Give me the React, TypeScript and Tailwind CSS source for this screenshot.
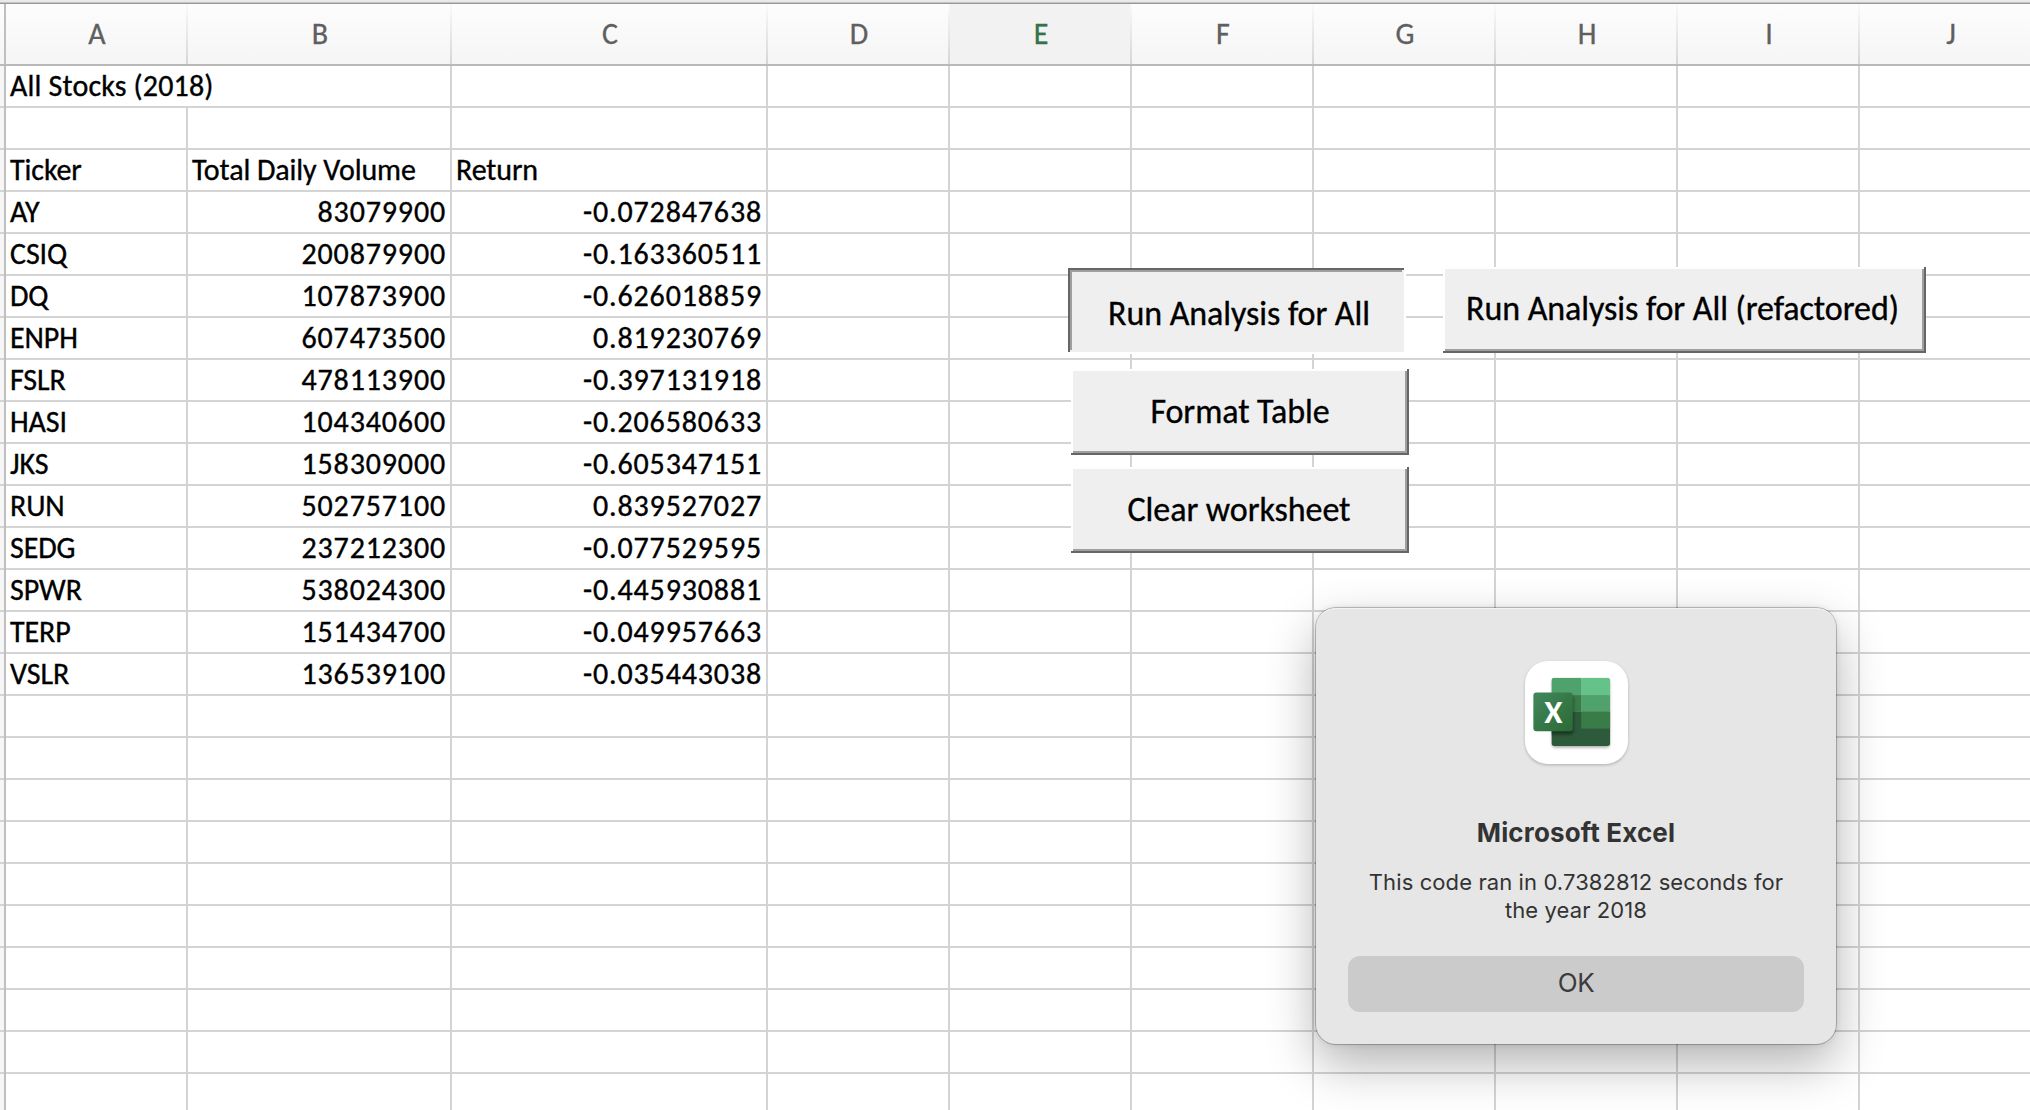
const COLUMNS = [
  { name: "A", width: "w-[182px]" },
  { name: "B", width: "w-[264px]" },
  { name: "C", width: "w-[316px]" },
  { name: "D", width: "w-[182px]" },
  { name: "E", width: "w-[182px]" },
  { name: "F", width: "w-[182px]" },
  { name: "G", width: "w-[182px]" },
  { name: "H", width: "w-[182px]" },
  { name: "I", width: "w-[182px]" },
  { name: "J", width: "w-[182px]" },
];

const ROWS: string[][] = [
  ["All Stocks (2018)"],
  [],
  ["Ticker", "Total Daily Volume", "Return"],
  ["AY", "83079900", "-0.072847638"],
  ["CSIQ", "200879900", "-0.163360511"],
  ["DQ", "107873900", "-0.626018859"],
  ["ENPH", "607473500", "0.819230769"],
  ["FSLR", "478113900", "-0.397131918"],
  ["HASI", "104340600", "-0.206580633"],
  ["JKS", "158309000", "-0.605347151"],
  ["RUN", "502757100", "0.839527027"],
  ["SEDG", "237212300", "-0.077529595"],
  ["SPWR", "538024300", "-0.445930881"],
  ["TERP", "151434700", "-0.049957663"],
  ["VSLR", "136539100", "-0.035443038"],
  ...Array.from({ length: 10 }, () => [] as string[]),
];

function ColumnHeaders() {
  return (
    <div className="flex h-[62px] shrink-0 border-b-2 border-[#b9b9b9] bg-linear-to-b from-[#fdfdfd] to-[#f5f5f5]">
      <div className="w-[6px] shrink-0 border-r-2 border-[#bfbfbf]" />
      {COLUMNS.map((c) => (
        <div key={c.name} className={`flex shrink-0 ${c.width}`}>
          <div
            className={`flex-1 pl-[2px] text-center text-[30px] leading-[60px] [-webkit-text-stroke:0.3px] ${
              c.name === "E" ? "bg-[#f2f2f2] text-[#337348]" : "text-[#5f5f5f]"
            }`}
          >
            {c.name}
          </div>
          <div className="w-[2px] bg-linear-to-b from-[#fafafa] to-[#d6d6d6]" />
        </div>
      ))}
    </div>
  );
}

function Row({ cells, spill }: { cells: string[]; spill: boolean }) {
  return (
    <div className="flex h-[42px] shrink-0">
      <div className="w-[6px] shrink-0 border-r-2 border-[#bfbfbf] bg-[#f6f6f6]">
        <div className="h-full border-b-2 border-[#d4d4d4]" />
      </div>
      {COLUMNS.map((c, i) => {
        const text = cells[i] ?? "";
        const numeric = /^-?\d/.test(text);
        return (
          <div
            key={c.name}
            className={`shrink-0 border-b-2 border-[#d4d4d4] pl-[4px] whitespace-nowrap text-[30px] leading-[40px] text-black [-webkit-text-stroke:0.35px] ${c.width} ${
              numeric ? "pr-[4px] text-right tracking-[0.85px]" : ""
            } ${spill && i === 0 ? "tracking-[0.16px]" : "border-r-2"} ${
              !numeric && !spill ? "tracking-[-0.1px]" : ""
            }`}
          >
            {text}
          </div>
        );
      })}
    </div>
  );
}

const RAISED =
  "shadow-[inset_-2px_-2px_0_#666,inset_2px_2px_0_#fff,inset_-4px_-4px_0_#9f9f9f]";
const PRESSED =
  "shadow-[inset_-2px_-2px_0_#fff,inset_2px_2px_0_#666,inset_-4px_-4px_0_#efefef,inset_4px_4px_0_#9f9f9f]";

function SheetButton({ label, place, pressed }: { label: string; place: string; pressed?: boolean }) {
  return (
    <button
      className={`absolute h-[86px] whitespace-nowrap bg-[#efefef] text-center text-[34px] tracking-[-0.06px] text-black [-webkit-text-stroke:0.35px] ${place} ${
        pressed ? PRESSED : RAISED
      }`}
    >
      {label}
    </button>
  );
}

function ExcelIcon() {
  return (
    <svg className="size-[103px] overflow-visible" viewBox="74 62 308 308">
      <defs>
        <linearGradient id="tile" x1="0" y1="0" x2="1" y2="1">
          <stop offset="0" stopColor="#41885a" />
          <stop offset="1" stopColor="#2b6a35" />
        </linearGradient>
        <clipPath id="book">
          <rect x="153" y="112" width="176" height="204" rx="9" />
        </clipPath>
        <filter id="soft" x="-30%" y="-30%" width="160%" height="160%">
          <feGaussianBlur stdDeviation="5" />
        </filter>
      </defs>
      <rect x="74" y="66" width="308" height="308" rx="68" fill="#000" opacity=".22" filter="url(#soft)" />
      <rect x="74" y="62" width="308" height="308" rx="68" fill="#fff" />
      <rect x="155" y="118" width="172" height="203" rx="9" fill="#000" opacity=".35" filter="url(#soft)" />
      <g clipPath="url(#book)">
        <rect x="153" y="112" width="89" height="52" fill="#4fa26b" />
        <rect x="242" y="112" width="87" height="52" fill="#65c389" />
        <rect x="153" y="164" width="89" height="50" fill="#3a7c48" />
        <rect x="242" y="164" width="87" height="50" fill="#4fa26b" />
        <rect x="153" y="214" width="176" height="103" fill="#2d5a3b" />
        <rect x="242" y="214" width="87" height="50" fill="#3a7c48" />
        <rect x="103" y="166" width="116" height="116" rx="9" fill="#000" opacity=".4" filter="url(#soft)" />
      </g>
      <rect x="99" y="156" width="118" height="116" rx="9" fill="url(#tile)" />
      <text
        x="159"
        y="246"
        textAnchor="middle"
        fill="#fff"
        fontSize="99"
        fontWeight="700"
        fontFamily="Carlito, Lato, sans-serif"
      >
        X
      </text>
    </svg>
  );
}

function Alert() {
  return (
    <div className="absolute left-[1316px] top-[608px] flex h-[436px] w-[520px] flex-col items-center rounded-[20px] bg-[#e6e6e6] px-8 pt-[53px] font-['Inter',sans-serif] text-[#333] shadow-[inset_0_1px_0_#f3f3f3,0_0_0_1px_rgba(0,0,0,0.22),0_0_6px_rgba(0,0,0,0.12),0_20px_50px_rgba(0,0,0,0.3)]">
      <ExcelIcon />
      <div className="mt-[53px] text-[26px] leading-[32px] font-bold tracking-[0.15px]">Microsoft Excel</div>
      <div className="mt-[19px] text-center text-[22px] leading-[28px] tracking-[0.1px]">
        This code ran in 0.7382812 seconds for
        <br />
        the year 2018
      </div>
      <button className="mt-[32px] h-[56px] w-full rounded-[12px] bg-[#cbcbcb] pb-[3px] text-[26px] tracking-[-0.3px] text-[#3c3c3c]">
        OK
      </button>
    </div>
  );
}

export default function App() {
  return (
    <div className="relative flex h-[1110px] w-[2030px] flex-col overflow-hidden bg-white font-[Carlito,Calibri,Lato,sans-serif]">
      <div className="h-[4px] shrink-0 border-b border-[#999] bg-[#e9e9e9]">
        <div className="h-[3px] border-b border-[#c4c4c4]" />
      </div>
      <ColumnHeaders />
      {ROWS.map((cells, i) => (
        <Row key={i} cells={cells} spill={i === 0} />
      ))}
      <SheetButton label="Run Analysis for All" place="left-[1068px] top-[268px] w-[338px] pt-[5px] pl-[4px]" pressed />
      <SheetButton label="Format Table" place="left-[1071px] top-[369px] w-[338px] pb-[2px]" />
      <SheetButton label="Clear worksheet" place="left-[1071px] top-[467px] w-[338px] pr-[2px] pb-[2px]" />
      <SheetButton label="Run Analysis for All (refactored)" place="left-[1443px] top-[267px] w-[483px] pr-[4px] pb-[3px]" />
      <Alert />
    </div>
  );
}
